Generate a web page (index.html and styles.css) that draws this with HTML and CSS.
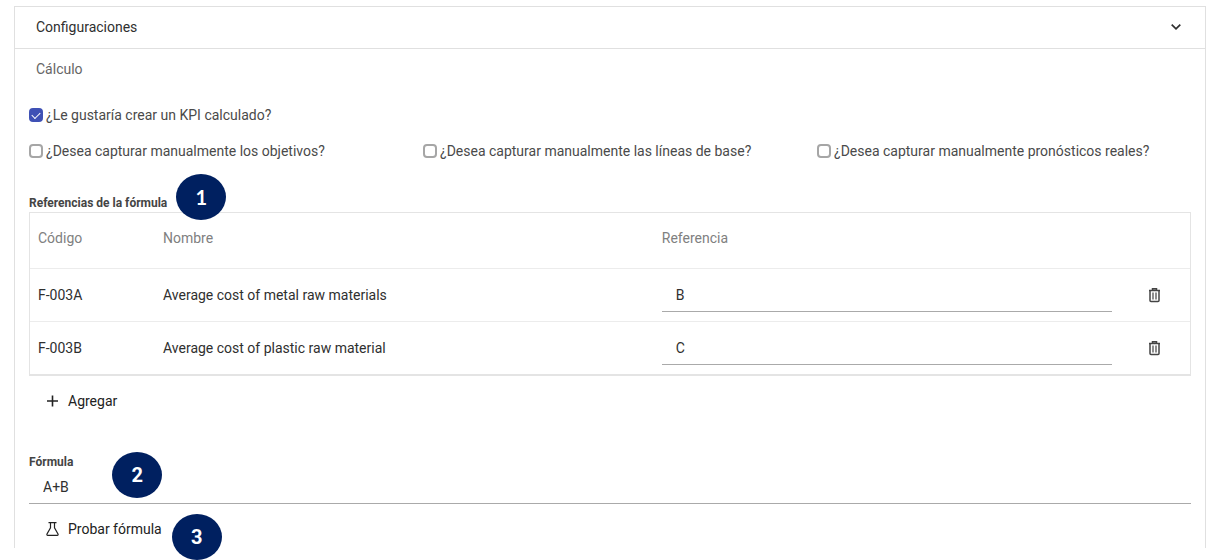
FILE: index.html
```html
<!DOCTYPE html>
<html lang="es">
<head>
  <meta charset="UTF-8">
  <meta name="viewport" content="width=device-width, initial-scale=1.0">
  <title>Configuraciones</title>
  <link rel="stylesheet" href="styles.css">
</head>
<body>
  <main class="panel">
    <button type="button" class="panel-header">
      <span>Configuraciones</span>
      <svg width="12" height="8" viewBox="0 0 12 8"><path d="M1.7 1.6 6 5.8l4.3-4.2" fill="none" stroke="currentColor" stroke-width="1.7"/></svg>
    </button>
    <h2 class="panel-subtitle">Cálculo</h2>

    <div class="panel-body">
      <!-- Options -->
      <div class="options">
        <label class="option"><input type="checkbox" checked>¿Le gustaría crear un KPI calculado?</label>
      </div>
      <div class="options">
        <label class="option"><input type="checkbox">¿Desea capturar manualmente los objetivos?</label>
        <label class="option"><input type="checkbox">¿Desea capturar manualmente las líneas de base?</label>
        <label class="option"><input type="checkbox">¿Desea capturar manualmente pronósticos reales?</label>
      </div>

      <!-- Formula references -->
      <section class="references">
        <h3 class="section-label">Referencias de la fórmula<span class="badge badge-references">1</span></h3>
        <table class="table">
          <thead>
            <tr>
              <th class="col-code">Código</th>
              <th class="col-name">Nombre</th>
              <th>Referencia</th>
              <th class="col-action"></th>
            </tr>
          </thead>
          <tbody>
            <tr>
              <td>F-003A</td>
              <td>Average cost of metal raw materials</td>
              <td><input type="text" class="ref-input" aria-label="Referencia" value="B"></td>
              <td>
                <button type="button" class="icon-button" aria-label="Eliminar">
                  <svg width="13" height="16" viewBox="0 0 13 16" fill="none" stroke="currentColor"><path d="M1 3.5h11M2 3.5v10q0 1 1 1h7q1 0 1-1v-10M4.5 3V1.8h4V3" stroke-width="1.5"/><path d="M5 5.5v7M8 5.5v7" stroke-width="1.2"/></svg>
                </button>
              </td>
            </tr>
            <tr>
              <td>F-003B</td>
              <td>Average cost of plastic raw material</td>
              <td><input type="text" class="ref-input" aria-label="Referencia" value="C"></td>
              <td>
                <button type="button" class="icon-button" aria-label="Eliminar">
                  <svg width="13" height="16" viewBox="0 0 13 16" fill="none" stroke="currentColor"><path d="M1 3.5h11M2 3.5v10q0 1 1 1h7q1 0 1-1v-10M4.5 3V1.8h4V3" stroke-width="1.5"/><path d="M5 5.5v7M8 5.5v7" stroke-width="1.2"/></svg>
                </button>
              </td>
            </tr>
          </tbody>
        </table>
        <button type="button" class="text-button">
          <svg width="13" height="14" viewBox="0 0 13 14"><path d="M6.5 1.5v11M1 7h11" fill="none" stroke="currentColor" stroke-width="1.6"/></svg>
          Agregar
        </button>
      </section>

      <!-- Formula -->
      <section class="formula">
        <label class="section-label" for="formula">Fórmula<span class="badge badge-formula">2</span></label>
        <input type="text" id="formula" class="formula-input" value="A+B">
        <button type="button" class="text-button">
          <svg width="13" height="14" viewBox="0 0 13 14"><path d="M2.5.7h8M4.5.7v5.1L1 12q-.5 1.3.8 1.3h9.4q1.3 0 .8-1.3L8.5 5.8V.7" fill="none" stroke="currentColor" stroke-width="1.2"/></svg>
          Probar fórmula
          <span class="badge badge-test">3</span>
        </button>
      </section>
    </div>
  </main>
</body>
</html>
```
FILE: styles.css
```css
* {
  box-sizing: border-box;
}

body {
  margin: 0;
  padding: 6px 12px 12px 14px;
  font-family: Roboto, Arial, sans-serif;
  font-size: 14px;
  line-height: 20px;
  color: #2f2f2f;
  background: #fff;
}

button,
input {
  font: inherit;
  color: inherit;
}

button {
  border: none;
  background: none;
  cursor: pointer;
}

svg {
  display: block;
}

/* Panel */
.panel {
  border: 1px solid #e0e0e0;
  border-bottom: none;
}

.panel-header {
  display: flex;
  align-items: center;
  justify-content: space-between;
  width: 100%;
  height: 42px;
  padding: 0 23px 2px 21px;
  border-bottom: 1px solid #e0e0e0;
}

.panel-subtitle {
  margin: 0;
  padding: 10px 21px;
  font-size: 14px;
  font-weight: 400;
  color: #666;
}

.panel-body {
  padding: 14px 14px 4px;
}

/* Checkboxes */
.options {
  display: grid;
  grid-template-columns: repeat(3, 1fr);
  column-gap: 20px;
  margin-bottom: 12px;
}

.option {
  display: flex;
  align-items: center;
  gap: 3px;
  height: 24px;
  color: #4a4a4a;
}

.option input {
  appearance: none;
  flex: none;
  width: 14px;
  height: 14px;
  margin: 0;
  border: 2px solid #a6a6a6;
  border-radius: 4px;
}

.option input:checked {
  display: grid;
  place-items: center;
  border-color: #3f51b5;
  background: #3f51b5;
}

.option input:checked::after {
  content: "";
  width: 7px;
  height: 4px;
  border: solid #fff;
  border-width: 0 0 1px 1px;
  transform: translateY(-1px) rotate(-45deg);
}

/* Sections */
.references {
  margin-top: 31px;
}

.formula {
  margin-top: 37px;
}

.section-label {
  display: block;
  position: relative;
  width: max-content;
  margin: 0;
  font-size: 12px;
  font-weight: 700;
  line-height: 18px;
  color: #444;
}

/* Step markers drawn over the form */
.badge {
  position: absolute;
  display: flex;
  align-items: center;
  justify-content: center;
  width: 50px;
  height: 46px;
  border-radius: 50%;
  background: #002060;
  color: #fff;
  font-size: 20px;
  font-weight: 700;
}

.badge-references {
  left: calc(100% + 9px);
  bottom: -8px;
  font-family: Lato, sans-serif;
}

.badge-formula {
  left: calc(100% + 39px);
  top: -1px;
}

.badge-test {
  left: calc(100% + 10px);
  top: 0;
}

/* Table */
.table {
  width: 100%;
  table-layout: fixed;
  border: 1px solid #e4e4e4;
  border-bottom: 2px solid #e4e4e4;
  border-collapse: separate;
  border-spacing: 0;
}

.table th {
  height: 56px;
  padding: 0 8px 6px;
  border-bottom: 1px solid #ececec;
  font-weight: 400;
  text-align: left;
  color: #808080;
}

.table td {
  height: 53px;
  padding: 0 8px;
  border-bottom: 1px solid #ececec;
}

.table tbody tr:last-child td {
  height: 52px;
  border-bottom: none;
}

.col-code {
  width: 125px;
}

.col-name {
  width: 43%;
}

.col-action {
  width: 70px;
}

.ref-input {
  display: block;
  width: 100%;
  height: 33px;
  padding: 0 14px;
  border: none;
  border-bottom: 1px solid #aaa;
  background: none;
}

.icon-button {
  display: block;
  margin: 0 auto;
  padding: 0 2px 0 0;
  color: #444;
}

.text-button {
  display: flex;
  align-items: center;
  gap: 9px;
  position: relative;
  height: 30px;
  margin-top: 10px;
  padding: 0 0 0 17px;
  color: #222;
}

.formula-input {
  display: block;
  width: 100%;
  height: 33px;
  padding: 0 14px;
  border: none;
  border-bottom: 1px solid #aaa;
  background: none;
}
```
